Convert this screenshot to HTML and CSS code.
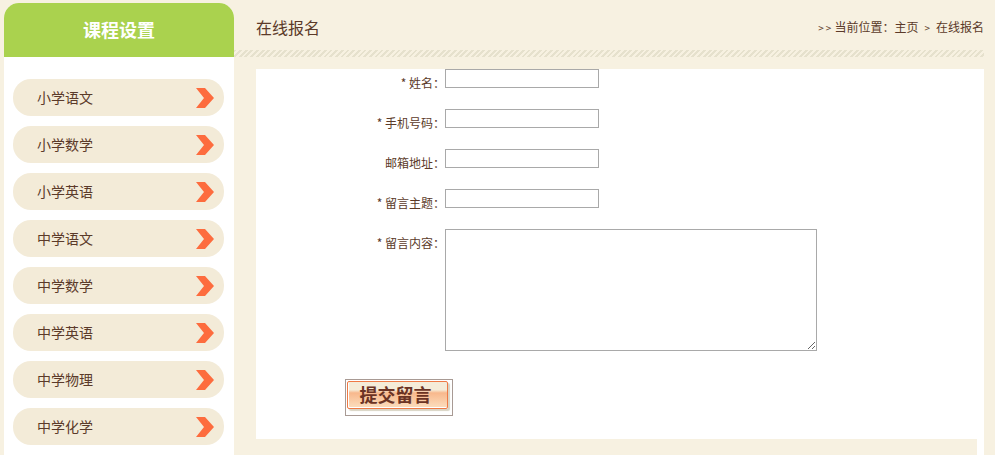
FILE: index.html
```html
<!DOCTYPE html>
<html lang="zh-CN">
    <head>
        <meta charset="UTF-8">
        <meta name="viewport" content="width=device-width, initial-scale=1.0">
        <link rel="stylesheet" href="styles.css">
        <title>在线报名</title>
    </head>
    <body>
        <div id="page">
            <div id="sidebar">
                <h2 id="side-title">课程设置</h2>
                <ul id="side-list">
                    <li class="side-item"><span class="side-text">小学语文</span><svg class="arrow" viewBox="0 0 18 20"><polygon points="0,0 9,0 18,10 9,20 0,20 8,10"/></svg></li>
                    <li class="side-item"><span class="side-text">小学数学</span><svg class="arrow" viewBox="0 0 18 20"><polygon points="0,0 9,0 18,10 9,20 0,20 8,10"/></svg></li>
                    <li class="side-item"><span class="side-text">小学英语</span><svg class="arrow" viewBox="0 0 18 20"><polygon points="0,0 9,0 18,10 9,20 0,20 8,10"/></svg></li>
                    <li class="side-item"><span class="side-text">中学语文</span><svg class="arrow" viewBox="0 0 18 20"><polygon points="0,0 9,0 18,10 9,20 0,20 8,10"/></svg></li>
                    <li class="side-item"><span class="side-text">中学数学</span><svg class="arrow" viewBox="0 0 18 20"><polygon points="0,0 9,0 18,10 9,20 0,20 8,10"/></svg></li>
                    <li class="side-item"><span class="side-text">中学英语</span><svg class="arrow" viewBox="0 0 18 20"><polygon points="0,0 9,0 18,10 9,20 0,20 8,10"/></svg></li>
                    <li class="side-item"><span class="side-text">中学物理</span><svg class="arrow" viewBox="0 0 18 20"><polygon points="0,0 9,0 18,10 9,20 0,20 8,10"/></svg></li>
                    <li class="side-item"><span class="side-text">中学化学</span><svg class="arrow" viewBox="0 0 18 20"><polygon points="0,0 9,0 18,10 9,20 0,20 8,10"/></svg></li>
                </ul>
            </div>

            <div id="main">
                <div id="main-head">
                    <h3 id="main-title">在线报名</h3>
                    <p id="crumbs"><span class="crumb-mark">&gt;&gt;</span>当前位置：主页<span class="crumb-sep">&gt;</span>在线报名</p>
                </div>
                <div id="panel">
                    <form id="apply-form">
                        <div class="row">
                            <label class="row-label">* 姓名：</label>
                            <input class="field" type="text">
                        </div>
                        <div class="row">
                            <label class="row-label">* 手机号码：</label>
                            <input class="field" type="text">
                        </div>
                        <div class="row">
                            <label class="row-label">邮箱地址：</label>
                            <input class="field" type="text">
                        </div>
                        <div class="row">
                            <label class="row-label">* 留言主题：</label>
                            <input class="field" type="text">
                        </div>
                        <div class="row">
                            <label class="row-label">* 留言内容：</label>
                            <textarea class="field-area"></textarea>
                        </div>
                        <button id="submit" type="button"><span id="submit-inner">提交留言</span></button>
                    </form>
                    <div id="panel-foot"></div>
                </div>
            </div>
        </div>
    </body>
</html>
```

FILE: styles.css
```css
html, body {
    margin: 0;
    padding: 0;
    height: 455px;
    overflow: hidden;
    background-color: #f7f1e1;
}

body {
    font-family: "Noto Sans CJK SC", "Liberation Sans", sans-serif;
    color: #5b3a29;
}

#page {
    display: flex;
    align-items: flex-start;
    padding: 3px 11px 0 4px;
}

#sidebar {
    width: 230px;
    flex-shrink: 0;
    height: 452px;
    background-color: white;
    border-radius: 15px 15px 0 0;
    overflow: hidden;
}

#side-title {
    margin: 0;
    height: 54px;
    line-height: 52px;
    text-align: center;
    font-size: 18px;
    font-weight: bold;
    color: white;
    background-color: #aad24e;
}

#side-list {
    list-style: none;
    margin: 22px 10px 0 9px;
    padding: 0;
    display: flex;
    flex-direction: column;
    gap: 10px;
}

.side-item {
    height: 37px;
    padding: 0 10px 0 24px;
    display: flex;
    justify-content: space-between;
    align-items: center;
    font-size: 14px;
    color: #5b3a29;
    background-color: #f3ebd8;
    border-radius: 18px;
}

.side-text {
    line-height: 20px;
    margin-bottom: 2px;
}

.arrow {
    width: 18px;
    height: 20px;
    fill: #fd6c3e;
}

#main {
    flex: 1;
    min-width: 0;
}

#main-head {
    height: 47px;
    padding: 0 0 7px 22px;
    display: flex;
    justify-content: space-between;
    align-items: center;
    background-image: repeating-linear-gradient(135deg, #e6e1cd 0, #e6e1cd 2px, #f7f1e1 2px, #f7f1e1 4px);
    background-size: 100% 7px;
    background-position: bottom;
    background-repeat: no-repeat;
}

#main-title {
    margin: 0;
    font-size: 16px;
    font-weight: normal;
    color: #5b3a29;
}

#crumbs {
    margin: 0;
    font-size: 12px;
    color: #5b3a29;
}

.crumb-mark {
    font-size: 10px;
    letter-spacing: 2px;
    margin-right: 1px;
}

.crumb-sep {
    font-size: 10px;
    margin: 0 6px;
}

#panel {
    margin: 12px 0 0 22px;
    background-color: white;
    height: 386px;
    display: flex;
    flex-direction: column;
}

#apply-form {
    flex: 1;
}

.row {
    display: flex;
    align-items: flex-start;
    margin-bottom: 17px;
}

.row-label {
    width: 189px;
    flex-shrink: 0;
    padding-top: 5px;
    box-sizing: border-box;
    text-align: right;
    font-size: 12px;
    line-height: 18px;
    color: #5b3a29;
}

.field {
    width: 154px;
    height: 19px;
    box-sizing: border-box;
    margin: 0;
    padding: 0 2px;
    border: 1px solid #a9a9a9;
    background-color: white;
}

.field-area {
    width: 372px;
    height: 122px;
    box-sizing: border-box;
    margin: 0;
    padding: 2px;
    border: 1px solid #a9a9a9;
    background-color: white;
    display: block;
}

#submit {
    display: block;
    width: 108px;
    height: 37px;
    margin: 28px 0 0 89px;
    padding: 1px 4px 6px 1px;
    box-sizing: border-box;
    border: 1px solid #a89a94;
    background-color: white;
    font-family: inherit;
}

#submit-inner {
    display: block;
    height: 100%;
    box-sizing: border-box;
    padding-right: 4px;
    line-height: 25px;
    text-align: center;
    font-size: 18px;
    font-weight: bold;
    color: #6b3324;
    border: 1px solid #ef7a45;
    border-radius: 2px;
    box-shadow: inset 1px -1px 0 white, 2px 2px 1px #d9d4c4;
    background-image: linear-gradient(#f5ecd8 0, #f5ecd8 30%, #f8b88c 42%, #fbd9b8 92%);
}

#panel-foot {
    height: 16px;
    margin-right: 7px;
    background-color: #f7f1e1;
}
```
